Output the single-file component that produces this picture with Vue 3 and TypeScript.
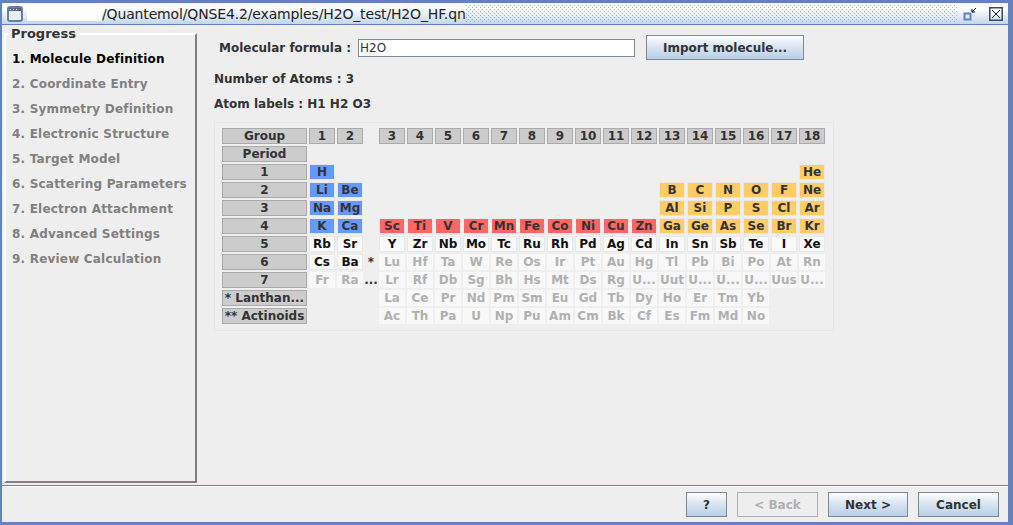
<template>
  <div class="window">
    <header class="titlebar">
      <svg class="app-icon" width="16" height="16" viewBox="0 0 16 16">
        <rect x="1" y="1" width="14" height="14" rx="2" fill="#e8eef6" stroke="#6b7f9c" stroke-width="2" />
        <rect x="2" y="2" width="12" height="3" fill="#56688a" />
        <path d="M3 3.5h1M6 3.5h1M9 3.5h1" stroke="#fff" />
      </svg>
      <span class="hidden-path"></span>
      <span class="title">/Quantemol/QNSE4.2/examples/H2O_test/H2O_HF.qn</span>
      <span class="dots"></span>
      <svg class="min-icon" width="14" height="14" viewBox="0 0 14 14">
        <rect x="1.5" y="6.5" width="6" height="6" fill="#dfe8f4" stroke="#6382bf" stroke-width="2" />
        <path d="M13 1 9 5M9 2v3h3" fill="none" stroke="#000" />
      </svg>
      <svg class="close-icon" width="14" height="14" viewBox="0 0 14 14">
        <rect x="0.75" y="0.75" width="12.5" height="12.5" fill="none" stroke="#3d4a60" stroke-width="1.5" />
        <path d="M3 3 11 11M11 3 3 11" stroke="#222" />
      </svg>
    </header>

    <div class="body">
      <aside class="progress">
        <span class="legend">Progress</span>
        <ol>
          <li v-for="(step, i) in steps" :key="step" :class="{ current: i === 0 }">{{ i + 1 }}. {{ step }}</li>
        </ol>
      </aside>

      <main class="content">
        <div class="formula">
          <label>Molecular formula :</label>
          <input type="text" value="H2O" />
          <button type="button" class="btn import">Import molecule...</button>
        </div>
        <p class="info first">Number of Atoms : 3</p>
        <p class="info">Atom labels : H1 H2 O3</p>

        <div class="table-panel">
          <div class="table">
            <span v-for="(cell, i) in cells" :key="i" :class="['cell', cell.kind]">{{ cell.text }}</span>
          </div>
        </div>
      </main>
    </div>

    <footer class="actions">
      <button type="button" class="btn help">?</button>
      <button type="button" class="btn wide" disabled>&lt; Back</button>
      <button type="button" class="btn next">Next &gt;</button>
      <button type="button" class="btn wide">Cancel</button>
    </footer>
  </div>
</template>

<script setup lang="ts">
type Kind = 'head' | 'blue' | 'red' | 'orange' | 'on' | 'off' | 'mark' | 'blank'

interface Cell {
  text: string
  kind: Kind
}

const steps = [
  'Molecule Definition',
  'Coordinate Entry',
  'Symmetry Definition',
  'Electronic Structure',
  'Target Model',
  'Scattering Parameters',
  'Electron Attachment',
  'Advanced Settings',
  'Review Calculation',
]

// label, then 19 slots: col 1, col 2, marker, col 3..18. "-" is an empty slot
const rows: [string, string][] = [
  ['Group', '1 2 - 3 4 5 6 7 8 9 10 11 12 13 14 15 16 17 18'],
  ['Period', '- - - - - - - - - - - - - - - - - - -'],
  ['1', 'H - - - - - - - - - - - - - - - - - He'],
  ['2', 'Li Be - - - - - - - - - - - B C N O F Ne'],
  ['3', 'Na Mg - - - - - - - - - - - Al Si P S Cl Ar'],
  ['4', 'K Ca - Sc Ti V Cr Mn Fe Co Ni Cu Zn Ga Ge As Se Br Kr'],
  ['5', 'Rb Sr - Y Zr Nb Mo Tc Ru Rh Pd Ag Cd In Sn Sb Te I Xe'],
  ['6', 'Cs Ba * Lu Hf Ta W Re Os Ir Pt Au Hg Tl Pb Bi Po At Rn'],
  ['7', 'Fr Ra ... Lr Rf Db Sg Bh Hs Mt Ds Rg U... Uut U... U... U... Uus U...'],
  ['* Lanthan...', '- - - La Ce Pr Nd Pm Sm Eu Gd Tb Dy Ho Er Tm Yb - -'],
  ['** Actinoids', '- - - Ac Th Pa U Np Pu Am Cm Bk Cf Es Fm Md No - -'],
]

const kindFor = (row: number, slot: number): Kind => {
  if (row === 0) return 'head'
  if (row <= 5) {
    if (slot < 2) return 'blue'
    return slot >= 13 ? 'orange' : 'red'
  }
  if (row === 6 || (row === 7 && slot < 2)) return 'on'
  return 'off'
}

const cells: Cell[] = rows.flatMap(([label, slots], row) => [
  { text: label, kind: 'head' as Kind },
  ...slots.split(' ').map((text, slot): Cell => {
    if (text === '-') return { text: '', kind: 'blank' }
    if (slot === 2) return { text, kind: 'mark' }
    return { text, kind: kindFor(row, slot) }
  }),
])
</script>

<style>
html,
body {
  margin: 0;
  overflow: hidden;
}
</style>

<style scoped>
.window {
  box-sizing: border-box;
  width: 1013px;
  height: 525px;
  display: flex;
  flex-direction: column;
  border: solid #6382bf;
  border-width: 3px 5px 3px 2px;
  background: #eeeeee;
  color: #333333;
  font: bold 12px "DejaVu Sans", sans-serif;
}

.titlebar {
  flex: none;
  height: 22px;
  box-sizing: border-box;
  display: flex;
  align-items: center;
  padding-left: 5px;
  border-bottom: 1px solid #6382bf;
  background: linear-gradient(#f4f7fb, #ffffff 25%, #c4d5ea);
  font-weight: normal;
  font-size: 14px;
  letter-spacing: -0.15px;
  color: #222222;
}

.app-icon {
  flex: none;
}

.hidden-path {
  flex: none;
  width: 75px;
  height: 15px;
  margin-left: 4px;
  background: #ffffff;
}

.title {
  flex: none;
  white-space: nowrap;
}

.dots {
  flex: 1;
  align-self: stretch;
  margin: 2px 0;
  background-image: radial-gradient(circle at 0.5px 0.5px, #9db1d8 0.7px, transparent 0.8px),
    radial-gradient(circle at 2.5px 2.5px, #9db1d8 0.7px, transparent 0.8px);
  background-size: 4px 4px;
}

.min-icon {
  flex: none;
  margin-left: 6px;
}

.close-icon {
  flex: none;
  margin: 0 5px 0 12px;
}

.body {
  flex: 1;
  min-height: 0;
  display: flex;
  border-bottom: 1px solid #6382bf;
}

.progress {
  position: relative;
  box-sizing: border-box;
  flex: none;
  width: 193px;
  height: 450px;
  margin: 8px 0 0 2px;
  border: 2px solid;
  border-color: #ffffff #808080 #808080 #ffffff;
}

.legend {
  position: absolute;
  top: -9px;
  left: 3px;
  padding: 0 2px;
  background: #eeeeee;
  font-size: 13px;
  line-height: 16px;
}

.progress ol {
  margin: 0;
  padding: 12px 0 0 6px;
  list-style: none;
}

.progress li {
  height: 25px;
  line-height: 25px;
  letter-spacing: 0.2px;
  color: #808080;
  white-space: nowrap;
}

.progress li.current {
  color: #000000;
}

.content {
  flex: 1;
  min-width: 0;
  padding: 10px 0 0 17px;
}

.formula {
  display: flex;
  align-items: center;
  height: 25px;
  padding-left: 5px;
}

.formula input {
  box-sizing: border-box;
  width: 277px;
  height: 18px;
  margin-left: 7px;
  padding: 0 1px;
  border: 1px solid #7a8a99;
  background: #ffffff;
  font: 12px "DejaVu Sans", sans-serif;
  color: #333333;
  outline: none;
}

.btn {
  box-sizing: border-box;
  height: 25px;
  padding: 0;
  border: 1px solid #7a8a99;
  background: linear-gradient(#ffffff, #dde8f3 40%, #b8cfe5);
  font: bold 12px "DejaVu Sans", sans-serif;
  color: #333333;
}

.btn:disabled {
  border-color: #b0b0b0;
  background: #eeeeee;
  color: #b0b0b0;
}

.import {
  width: 158px;
  margin-left: 11px;
}

.info {
  margin: 0;
  height: 25px;
  line-height: 25px;
}

.info.first {
  margin-top: 7px;
}

.table-panel {
  box-sizing: border-box;
  width: 620px;
  height: 209px;
  margin-top: 5px;
  padding: 5px 7px;
  border: 1px solid #e6e6e6;
  background: #efefef;
}

.table {
  display: grid;
  grid-template-columns: 85px 26px 26px 12px repeat(16, 26px);
  grid-auto-rows: 16px;
  gap: 2px;
}

.cell {
  display: flex;
  align-items: center;
  justify-content: center;
  overflow: hidden;
  white-space: nowrap;
  line-height: 1;
}

.head {
  box-shadow: inset 0 0 0 1px #aaaaaa;
  background: #cccccc;
}

.blue,
.red,
.orange,
.on {
  box-shadow: inset 0 0 0 1px #e8e8e8;
}

.blue {
  background: #6699ff;
}

.red {
  background: #ff6666;
}

.orange {
  background: #ffcc66;
}

.on {
  background: #fafafa;
  color: #111111;
}

.off {
  background: #f8f8f8;
  color: #b0b0b0;
}

.actions {
  flex: none;
  height: 36px;
  display: flex;
  gap: 10px;
  padding: 5px 9px 0 0;
  box-sizing: border-box;
  justify-content: flex-end;
  border-top: 1px solid #ffffff;
}

.help {
  width: 41px;
}

.wide {
  width: 81px;
}

.next {
  width: 80px;
}
</style>
